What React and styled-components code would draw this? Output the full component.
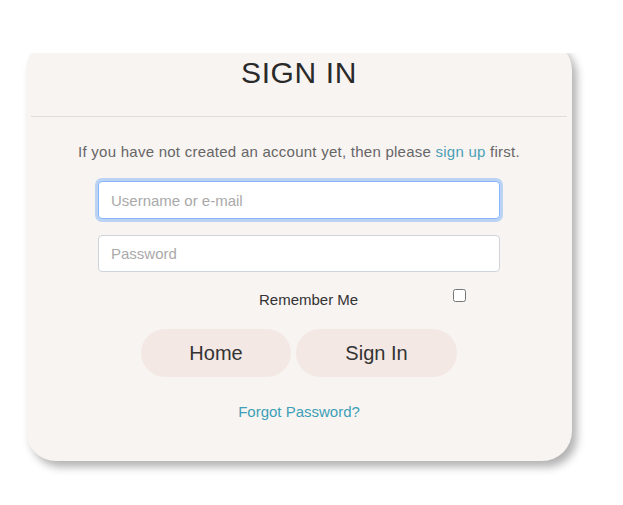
import React from "react";
import styled, { createGlobalStyle } from "styled-components";

const GlobalStyle = createGlobalStyle`
  html, body {
    margin: 0;
    padding: 0;
    background: #ffffff;
  }
  body {
    font-family: "Liberation Sans", Arial, sans-serif;
  }
`;

// white strip the page scrolled the card under
const TopBar = styled.div`
  position: fixed;
  top: 0;
  left: 0;
  right: 0;
  height: 53px;
  background: #ffffff;
  z-index: 2;
`;

const Page = styled.div`
  padding: 40px 0 40px 26px;
`;

const Card = styled.div`
  width: 546px;
  background: #f8f4f2;
  border-radius: 30px;
  box-shadow: 5px 6px 8px rgba(0, 0, 0, 0.3);
  padding-bottom: 40px;
  display: flex;
  flex-direction: column;
  align-items: center;
`;

const Title = styled.h1`
  margin: 16px 0 0;
  font-size: 30px;
  line-height: 34px;
  font-weight: normal;
  color: #2a2a2a;
  letter-spacing: 0.6px;
`;

const Divider = styled.hr`
  align-self: stretch;
  margin: 26px 5px 0;
  border: 0;
  border-top: 1px solid #e2dcd8;
`;

const Intro = styled.p`
  margin: 26px 0 0;
  font-size: 15px;
  line-height: 18px;
  letter-spacing: 0.25px;
  color: #666666;
`;

const TextLink = styled.a`
  color: ${(p) => p.color || "#4a9fb5"};
  text-decoration: none;
`;

const Input = styled.input`
  box-sizing: border-box;
  width: 402px;
  height: ${(p) => (p.focused ? "38px" : "37px")};
  margin-top: ${(p) => p.gap};
  padding: 0 12px;
  font-family: inherit;
  font-size: 15px;
  color: #333333;
  background: #ffffff;
  border: 1px solid ${(p) => (p.focused ? "#86b7fe" : "#ced4da")};
  border-radius: 4px;
  box-shadow: ${(p) => (p.focused ? "0 0 0 3px rgba(13, 110, 253, 0.25)" : "none")};
  outline: none;

  &::placeholder {
    color: #a9a9a9;
  }
`;

const RememberRow = styled.div`
  width: 402px;
  margin-top: 16px;
  padding-left: 161px;
  box-sizing: border-box;
  display: flex;
  align-items: flex-start;
`;

const RememberLabel = styled.label`
  font-size: 15px;
  line-height: 24px;
  color: #333333;
`;

const Check = styled.input`
  margin: 1px 0 0 95px;
  width: 13px;
  height: 13px;
`;

const Buttons = styled.div`
  display: flex;
  gap: 5px;
  margin-top: 17px;
`;

const PillButton = styled.button`
  width: ${(p) => p.w}px;
  height: 48px;
  border: 0;
  border-radius: 24px;
  background: #f3e8e4;
  color: #333333;
  font-family: inherit;
  font-size: 20px;
  cursor: pointer;
`;

const Footer = styled.div`
  margin-top: 26px;
  font-size: 15px;
  line-height: 18px;
`;

export default function App() {
  return (
    <>
      <GlobalStyle />
      <TopBar />
      <Page>
        <Card>
          <Title>SIGN IN</Title>
          <Divider />
          <Intro>
            If you have not created an account yet, then please{" "}
            <TextLink href="#">sign up</TextLink> first.
          </Intro>
          <Input gap="20px" focused placeholder="Username or e-mail" />
          <Input gap="16px" type="password" placeholder="Password" />
          <RememberRow>
            <RememberLabel htmlFor="remember">Remember Me</RememberLabel>
            <Check id="remember" type="checkbox" />
          </RememberRow>
          <Buttons>
            <PillButton w={150}>Home</PillButton>
            <PillButton w={161}>Sign In</PillButton>
          </Buttons>
          <Footer>
            <TextLink href="#" color="#3d9fb8">
              Forgot Password?
            </TextLink>
          </Footer>
        </Card>
      </Page>
    </>
  );
}
